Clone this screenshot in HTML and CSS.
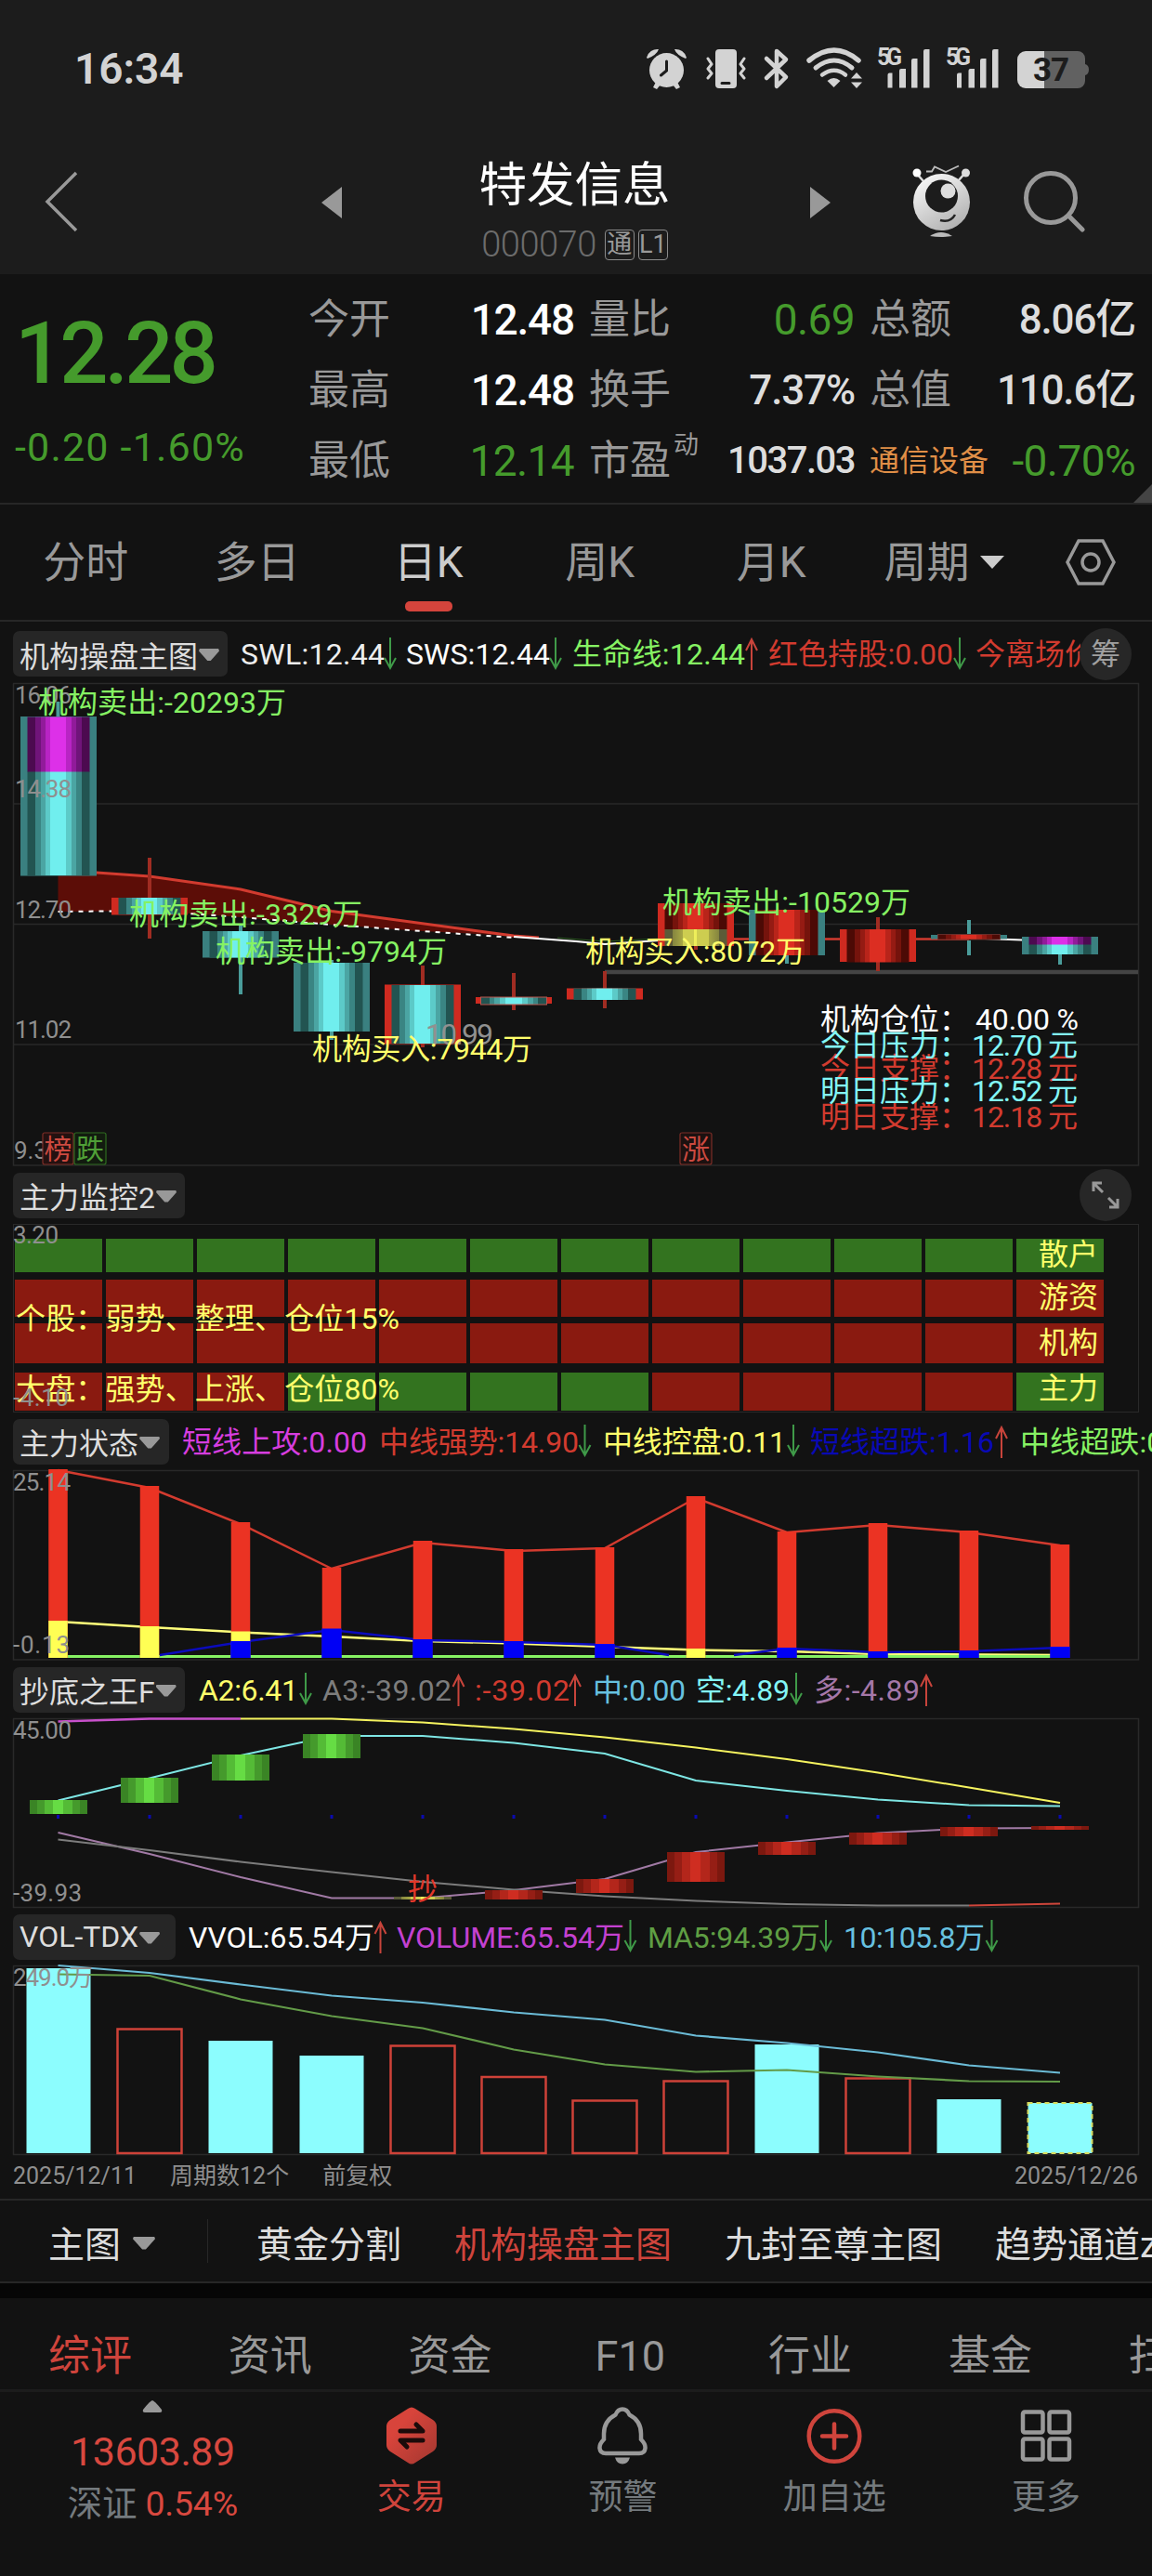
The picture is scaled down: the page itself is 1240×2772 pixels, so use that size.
FILE: index.html
```html
<!DOCTYPE html>
<html lang="zh-CN">
<head>
  <meta charset="UTF-8">
  <title>特发信息 000070</title>
  <link rel="stylesheet" href="styles.css">
</head>
<body>

  <!-- shared gradients and arrows -->
  <svg class="defs" width="0" height="0">
    <defs>
      <linearGradient id="cyan">
        <stop offset=".13" stop-color="#225451"/><stop offset=".13" stop-color="#3a8583"/>
        <stop offset=".21" stop-color="#3a8583"/><stop offset=".21" stop-color="#4ba5a3"/>
        <stop offset=".29" stop-color="#4ba5a3"/><stop offset=".29" stop-color="#5ccac8"/>
        <stop offset=".37" stop-color="#5ccac8"/><stop offset=".37" stop-color="#70eeee"/>
        <stop offset=".62" stop-color="#70eeee"/><stop offset=".62" stop-color="#5ccac8"/>
        <stop offset=".71" stop-color="#5ccac8"/><stop offset=".71" stop-color="#4ba5a3"/>
        <stop offset=".79" stop-color="#4ba5a3"/><stop offset=".79" stop-color="#3a8583"/>
        <stop offset=".87" stop-color="#3a8583"/><stop offset=".87" stop-color="#225451"/>
      </linearGradient>
      <linearGradient id="pink">
        <stop offset=".13" stop-color="#4c0a50"/><stop offset=".13" stop-color="#70147a"/>
        <stop offset=".21" stop-color="#70147a"/><stop offset=".21" stop-color="#911b9a"/>
        <stop offset=".29" stop-color="#911b9a"/><stop offset=".29" stop-color="#b824c4"/>
        <stop offset=".37" stop-color="#b824c4"/><stop offset=".37" stop-color="#dd30e8"/>
        <stop offset=".62" stop-color="#dd30e8"/><stop offset=".62" stop-color="#b824c4"/>
        <stop offset=".71" stop-color="#b824c4"/><stop offset=".71" stop-color="#911b9a"/>
        <stop offset=".79" stop-color="#911b9a"/><stop offset=".79" stop-color="#70147a"/>
        <stop offset=".87" stop-color="#70147a"/><stop offset=".87" stop-color="#4c0a50"/>
      </linearGradient>
      <linearGradient id="red">
        <stop offset=".13" stop-color="#4c0a05"/><stop offset=".13" stop-color="#75130c"/>
        <stop offset=".21" stop-color="#75130c"/><stop offset=".21" stop-color="#951b13"/>
        <stop offset=".29" stop-color="#951b13"/><stop offset=".29" stop-color="#b8241a"/>
        <stop offset=".37" stop-color="#b8241a"/><stop offset=".37" stop-color="#dc2e22"/>
        <stop offset=".62" stop-color="#dc2e22"/><stop offset=".62" stop-color="#b8241a"/>
        <stop offset=".71" stop-color="#b8241a"/><stop offset=".71" stop-color="#951b13"/>
        <stop offset=".79" stop-color="#951b13"/><stop offset=".79" stop-color="#75130c"/>
        <stop offset=".87" stop-color="#75130c"/><stop offset=".87" stop-color="#4c0a05"/>
      </linearGradient>
      <linearGradient id="gold">
        <stop offset=".13" stop-color="#5b5b38"/><stop offset=".13" stop-color="#85853f"/>
        <stop offset=".29" stop-color="#a8a845"/><stop offset=".29" stop-color="#cdcd50"/>
        <stop offset=".47" stop-color="#cdcd50"/><stop offset=".47" stop-color="#eeee5a"/>
        <stop offset=".52" stop-color="#eeee5a"/><stop offset=".52" stop-color="#cdcd50"/>
        <stop offset=".71" stop-color="#cdcd50"/><stop offset=".71" stop-color="#a8a845"/>
        <stop offset=".87" stop-color="#85853f"/><stop offset=".87" stop-color="#5b5b38"/>
      </linearGradient>
      <linearGradient id="green">
        <stop offset=".13" stop-color="#3a8425"/><stop offset=".13" stop-color="#459a2c"/>
        <stop offset=".26" stop-color="#459a2c"/><stop offset=".26" stop-color="#54bb36"/>
        <stop offset=".4" stop-color="#54bb36"/><stop offset=".4" stop-color="#66dc44"/>
        <stop offset=".58" stop-color="#66dc44"/><stop offset=".58" stop-color="#54bb36"/>
        <stop offset=".74" stop-color="#54bb36"/><stop offset=".74" stop-color="#459a2c"/>
        <stop offset=".87" stop-color="#459a2c"/><stop offset=".87" stop-color="#3a8425"/>
      </linearGradient>
      <linearGradient id="brick">
        <stop offset=".13" stop-color="#7c180f"/><stop offset=".13" stop-color="#951e15"/>
        <stop offset=".26" stop-color="#951e15"/><stop offset=".26" stop-color="#b3261b"/>
        <stop offset=".4" stop-color="#b3261b"/><stop offset=".4" stop-color="#cf2d21"/>
        <stop offset=".58" stop-color="#cf2d21"/><stop offset=".58" stop-color="#b3261b"/>
        <stop offset=".74" stop-color="#b3261b"/><stop offset=".74" stop-color="#951e15"/>
        <stop offset=".87" stop-color="#951e15"/><stop offset=".87" stop-color="#7c180f"/>
      </linearGradient>
      <linearGradient id="silver" x1="0" y1="0" x2=".6" y2="1">
        <stop offset="0" stop-color="#fff"/><stop offset="1" stop-color="#b4b4b4"/>
      </linearGradient>
      <linearGradient id="trade" x1="0" y1="0" x2="1" y2="1">
        <stop offset=".3" stop-color="#d8443b"/><stop offset="1" stop-color="#a23730"/>
      </linearGradient>
      <path id="down" d="M0-17V16M-6 5L0 16L6 5" fill="none" stroke="#3f9a48" stroke-width="2"/>
      <path id="up" d="M0 17V-16M-6-4L0-16L6-4" fill="none" stroke="#c8443b" stroke-width="2"/>
    </defs>
  </svg>

  <header class="top">
    <div class="status">
      <span class="clock">16:34</span>
      <svg class="status-icons" width="484" height="48" viewBox="692 50 484 48">
        <g fill="#d3d3d3">
          <circle cx="717.5" cy="75.5" r="18.5"/>
          <path d="M696 62A12 12 0 0 1 709 53Q707 59 697 63ZM739 62A12 12 0 0 0 726 53Q728 59 738 63Z"/>
          <path d="M703 94l3-6 5 3-4 5zM732 94l-3-6-5 3 4 5z"/>
          <rect x="770" y="53" width="23" height="42" rx="4"/>
          <path d="M897.500 94l-7-7q7-6 14 0z"/>
          <path d="M922 78l6 6.500h-12zM922 95l6-6.500h-12z"/>
          <path d="M955.500 80.500a2 2 0 0 1 2-2h3v16h-5zM968 76a2 2 0 0 1 2-2h5v20.500h-7zM981 65a2 2 0 0 1 2-2h4.500v31.500H981zM994 55a2 2 0 0 1 2-2h4.500v41.500H994z"/>
          <path d="M1030 80.500a2 2 0 0 1 2-2h3v16h-5zM1042.500 76a2 2 0 0 1 2-2h4.500v20.500h-6.500zM1055 65a2 2 0 0 1 2-2h4.500v31.500H1055zM1068 55a2 2 0 0 1 2-2h4.500v41.500H1068z"/>
          <path d="M1104 55h20v40h-20a9 9 0 0 1-9-9V64a9 9 0 0 1 9-9z"/>
        </g>
        <path d="M1124 55h36a8 8 0 0 1 8 8v6q4 1 4 6t-4 6v6a8 8 0 0 1-8 8h-36z" fill="#616161"/>
        <g fill="none" stroke="#d3d3d3" stroke-linecap="round" stroke-linejoin="round">
          <path d="M762 63l4 6-4 5 4 5-4 5M801 63l-4 6 4 5-4 5 4 5" stroke-width="3"/>
          <path d="M825 63l21 20-10 10V55l10 9-21 20" stroke-width="4.500"/>
          <path d="M871 65Q898 43 924 65" stroke-width="5.500"/>
          <path d="M878 73Q898 57 917 73" stroke-width="5"/>
          <path d="M885 80.500Q898 71 910 80.500" stroke-width="4.500"/>
        </g>
        <path d="M717.500 66v10l-6 5M777 89.500h8" fill="none" stroke="#1c1c1c" stroke-width="3" stroke-linecap="round"/>
        <text x="944" y="70" class="g5" textLength="27">5G</text>
        <text x="1018" y="70" class="g5" textLength="27">5G</text>
        <text x="1112" y="87" class="batt" textLength="39">37</text>
      </svg>
    </div>
    <div class="titlebar">
      <svg class="back" width="40" height="70" viewBox="46 182 40 70"><path d="M82 186L51 217L82 248" fill="none" stroke="#999" stroke-width="3.500"/></svg>
      <svg class="prev" width="22" height="34" viewBox="0 0 22 34"><path d="M22 0V34L0 17z" fill="#999"/></svg>
      <div class="stock">
        <h1>特发信息</h1>
        <div class="code"><span>000070</span><i>通</i><i>L1</i></div>
      </div>
      <svg class="next" width="22" height="34" viewBox="0 0 22 34"><path d="M0 0V34L22 17z" fill="#999"/></svg>
      <svg class="mascot" width="66" height="82" viewBox="980 176 66 82">
        <path d="M986 186l8 9M1039 186l-8 9" stroke="#ddd" stroke-width="2.500"/>
        <path d="M997 184.500h6l3-5 12 5.500 14-6.500" fill="none" stroke="#bbb" stroke-width="1.800"/>
        <circle cx="987" cy="186" r="4.500" fill="#fff"/><circle cx="1039.500" cy="186" r="4.500" fill="#ddd"/>
        <circle cx="1013.500" cy="217.500" r="30.500" fill="url(#silver)"/>
        <circle cx="1013.500" cy="211" r="17.500" fill="#1c1c1c"/>
        <circle cx="1020.500" cy="205.500" r="8" fill="#ddd"/>
        <path d="M1012 237q11 3 16-6" fill="none" stroke="#222" stroke-width="2.500"/>
        <path d="M1001 254q12-8 24 0q-12 2-24 0z" fill="#bbb"/>
      </svg>
      <svg class="search" width="68" height="70" viewBox="1100 182 68 70"><g fill="none" stroke="#999" stroke-width="5"><circle cx="1131" cy="213" r="26.500"/><path d="M1151 233l14 14" stroke-linecap="round"/></g></svg>
    </div>
  </header>

  <section class="quote">
    <div class="price">
      <div class="last">12.28</div>
      <div class="change">-0.20 -1.60%</div>
    </div>
    <div class="facts">
      <span>今开</span><b>12.48</b><span>量比</span><b class="g">0.69</b><span>总额</span><b class="w">8.06亿</b>
      <span>最高</span><b>12.48</b><span>换手</span><b class="w">7.37%</b><span>总值</span><b class="w">110.6亿</b>
      <span>最低</span><b class="g">12.14</b><span>市盈<sup>动</sup></span><b class="pe">1037.03</b><span class="sector">通信设备</span><b class="g">-0.70%</b>
    </div>
    <div class="corner"></div>
  </section>

  <nav class="periods">
    <span>分时</span><span>多日</span><span class="on">日K</span><span>周K</span><span>月K</span>
    <span class="more">周期<svg width="26" height="14" viewBox="0 0 26 14"><path d="M0 0H26L13 14z" fill="#ccc"/></svg></span>
    <svg class="gear" width="54" height="50" viewBox="0 0 54 50"><g fill="none" stroke="#999" stroke-width="3.500"><path d="M14 2H40L52 25L40 48H14L2 25z"/><circle cx="27" cy="25" r="9"/></g></svg>
  </nav>

  <section class="panel">
    <div class="bar bar-main">
      <div class="chip c1">机构操盘主图<i></i></div>
      <svg class="legend" width="995" height="66" viewBox="245 669 995 66">
        <text x="259" y="715" fill="#eee" textLength="155">SWL:12.44</text><use href="#down" x="420" y="703"/>
        <text x="437" y="715" fill="#fff" textLength="155">SWS:12.44</text><use href="#down" x="598" y="703"/>
        <text x="616" y="715" fill="#86f263" textLength="186">生命线:12.44</text><use href="#up" x="809" y="704"/>
        <text x="827" y="715" fill="#d23b2f" textLength="199">红色持股:0.00</text><use href="#down" x="1033" y="703"/>
        <text x="1050" y="715" fill="#d23b2f">今离场价</text>
        <rect x="1163" y="669" width="77" height="66" fill="#121212"/>
        <circle cx="1190" cy="704" r="28" fill="#272727"/>
        <text x="1174" y="715" fill="#a0a0a0">筹</text>
      </svg>
    </div>
    <svg class="chart" width="1240" height="520" viewBox="0 735 1240 520">
      <path class="frame" d="M14 735.500H1225.500V1254H14.500V735.500M14 865H1225M14 994.500H1225M14 1124H1225"/>
      <text class="axis" x="16" y="756.500" textLength="61">16.06</text>
      <path d="M62.500 938L104 939L161 943L259 957L357 980.500L553 1007L455 1002L357 995L259 987L161 980L62.500 981z" fill="#5c0d07"/>
      <path d="M62.500 938L104 939L161 943L259 957L357 980.500L553 1007L580 1009" fill="none" stroke="#d23b2f" stroke-width="3"/>
      <path d="M62.500 981L161 980L259 987L357 995L455 1002L553 1009" fill="none" stroke="#fff" stroke-width="2" stroke-dasharray="5 6"/>
      <path d="M553 1008L620 1013L651 1016L709 1012" fill="none" stroke="#fff" stroke-width="2"/>
      <path d="M600 1009L651 1013L709 1010" fill="none" stroke="#2b5a20"/>
      <path d="M790 1010.500H1043" stroke="#d23b2f" stroke-width="2.500"/>
      <path d="M1060 1010L1100 1011.500" stroke="#fff" stroke-width="2"/>
      <path d="M651 1046H1225" stroke="#444" stroke-width="4.500"/>

      <!-- wicks -->
      <path d="M62.500 755V772M259 995V1070M357 1033V1119M847 1028V1037M1141 1027V1038" stroke="#4a9c9a" stroke-width="4"/>
      <path d="M161 923V1010M455 1039V1127M553 1047V1087M651 1045V1085M749 1018V1022M945 987V1045" stroke="#a02c22" stroke-width="4"/>
      <!-- bodies -->
      <g fill="#3a8080">
        <rect x="22" y="771" width="82" height="171.500"/>
        <rect x="218" y="1002" width="82" height="28.500"/>
        <rect x="316" y="1036" width="82" height="74"/>
        <rect x="806" y="979" width="82" height="49"/>
        <rect x="1002" y="1006" width="82" height="4.500"/>
        <rect x="1100" y="1008" width="82" height="19"/>
      </g>
      <g fill="#cf2a20">
        <rect x="120" y="966" width="82" height="18.500"/>
        <rect x="414" y="1059.500" width="82" height="64"/>
        <rect x="512" y="1073" width="82" height="7"/>
        <rect x="610" y="1063.500" width="82" height="12"/>
        <rect x="708" y="972" width="82" height="46"/>
        <rect x="904" y="1000" width="82" height="35"/>
      </g>
      <g fill="url(#cyan)">
        <rect x="29.500" y="830" width="67" height="112"/>
        <rect x="127.500" y="966" width="67" height="18"/>
        <rect x="225.500" y="1002" width="67" height="28.500"/>
        <rect x="323.500" y="1036" width="67" height="74"/>
        <rect x="421.500" y="1060" width="67" height="63"/>
        <rect x="517.500" y="1073" width="71" height="8" stroke="#b9564f"/>
        <rect x="617.500" y="1063.500" width="67" height="12.500"/>
        <rect x="1107.500" y="1016" width="67" height="11"/>
      </g>
      <g fill="url(#pink)">
        <rect x="29.500" y="771.500" width="67" height="59"/>
        <rect x="1107.500" y="1008" width="67" height="8.500"/>
      </g>
      <g fill="url(#red)">
        <rect x="715.500" y="972" width="67" height="28"/>
        <rect x="813.500" y="979" width="67" height="49"/>
        <rect x="911.500" y="1000" width="67" height="35.500"/>
        <rect x="1009.500" y="1005.500" width="67" height="5.500" stroke="#6d3531" stroke-width=".8"/>
      </g>
      <rect x="715.500" y="1000" width="67" height="18" fill="url(#gold)"/>
      <path d="M1043 990V1005M1043 1012V1028" stroke="#4a9c9a" stroke-width="4"/>
      <path d="M161 923V966M161 1000V1010" stroke="#a02c22" stroke-width="4"/>

      <text class="axis" x="16" y="857.500" textLength="61">14.38</text>
      <text class="axis" x="16" y="987.500" textLength="61">12.70</text>
      <text class="axis" x="16" y="1116.500" textLength="61">11.02</text>
      <text class="axis" x="15" y="1247">9.3</text>
      <text x="458" y="1123.500" fill="#909090" textLength="73">10.99</text>

      <g fill="#86f263">
        <text x="41" y="767" textLength="267">机构卖出:-20293万</text>
        <text x="139" y="995" textLength="251">机构卖出:-3329万</text>
        <text x="232" y="1034.500" textLength="249">机构卖出:-9794万</text>
        <text x="713" y="982" textLength="267">机构卖出:-10529万</text>
      </g>
      <g fill="#ffff6b">
        <text x="336" y="1140" textLength="237">机构买入:7944万</text>
        <text x="630" y="1034.500" textLength="237">机构买入:8072万</text>
      </g>
      <g fill="#fff"><text x="883" y="1107.500">机构仓位：</text><text x="1050" y="1107.500" textLength="111">40.00 %</text></g>
      <g fill="#d23b2f"><text x="883" y="1160.500">今日支撑：</text><text x="1046" y="1160.500" textLength="114">12.28 元</text></g>
      <g fill="#d23b2f"><text x="883" y="1213">明日支撑：</text><text x="1046" y="1213" textLength="114">12.18 元</text></g>
      <g fill="#83f6f6"><text x="883" y="1135.500">今日压力：</text><text x="1046" y="1135.500" textLength="114">12.70 元</text></g>
      <g fill="#83f6f6"><text x="883" y="1184.500">明日压力：</text><text x="1046" y="1184.500" textLength="114">12.52 元</text></g>

      <g stroke-width="1.200">
        <rect x="46" y="1219" width="33" height="34" rx="2" fill="#241110" stroke="#7c2d27"/>
        <rect x="80" y="1219" width="34" height="34" rx="2" fill="#121b0f" stroke="#2e6b20"/>
        <rect x="732" y="1219" width="34" height="34" rx="2" fill="#1c1110" stroke="#7c2d27"/>
      </g>
      <text class="tag" x="47.500" y="1247" fill="#cc4a40">榜</text>
      <text class="tag" x="82" y="1247" fill="#4f9f37">跌</text>
      <text class="tag" x="734" y="1247" fill="#cc4a40">涨</text>
    </svg>
  </section>

  <section class="panel">
    <div class="bar bar-mon">
      <div class="chip c2">主力监控2<i></i></div>
      <div class="expand"><svg width="32" height="32" viewBox="0 0 32 32"><path d="M3 12V3H12M3 3L13 13M29 20V29H20M29 29L19 19" fill="none" stroke="#999" stroke-width="3"/></svg></div>
    </div>
    <div class="monitor">
      <div class="cells r1"><i></i><i></i><i></i><i></i><i></i><i></i><i></i><i></i><i></i><i></i><i></i><i></i></div>
      <div class="cells r2"><i></i><i></i><i></i><i></i><i></i><i></i><i></i><i></i><i></i><i></i><i></i><i></i></div>
      <div class="cells r3"><i></i><i></i><i></i><i></i><i></i><i></i><i></i><i></i><i></i><i></i><i></i><i></i></div>
      <div class="cells r4"><i></i><i></i><i></i><i class="up"></i><i class="up"></i><i class="up"></i><i class="up"></i><i></i><i></i><i></i><i></i><i class="up"></i></div>
      <svg class="over" width="1240" height="204" viewBox="0 1316 1240 204">
        <g fill="#ffff6b">
          <text x="1118" y="1361">散户</text><text x="1118" y="1407">游资</text>
          <text x="1118" y="1456">机构</text><text x="1118" y="1505">主力</text>
          <text x="17" y="1430" textLength="413">个股：弱势、整理、仓位15%</text>
          <text x="17" y="1506" textLength="413">大盘：强势、上涨、仓位80%</text>
        </g>
        <text class="axis" x="14" y="1338" textLength="49">3.20</text>
        <text class="axis" x="14" y="1513" textLength="60">-4.10</text>
      </svg>
    </div>
  </section>

  <section class="panel">
    <div class="bar">
      <div class="chip c3">主力状态<i></i></div>
      <svg class="legend" width="1058" height="62" viewBox="182 1520 1058 62">
        <text x="196" y="1563" fill="#d63ddf" textLength="199">短线上攻:0.00</text>
        <text x="408" y="1563" fill="#d23b2f" textLength="215">中线强势:14.90</text><use href="#down" x="629.500" y="1550"/>
        <text x="649" y="1563" fill="#ffff6b" textLength="197">中线控盘:0.11</text><use href="#down" x="854" y="1550"/>
        <text x="872" y="1563" fill="#0909b4" textLength="198">短线超跌:1.16</text><use href="#up" x="1078" y="1552"/>
        <text x="1098" y="1563" fill="#86f263" textLength="199">中线超跌:0.00</text>
      </svg>
    </div>
    <svg class="chart" width="1240" height="205" viewBox="0 1582 1240 205">
      <path class="frame" d="M14 1582.500H1225.500V1786H14.500V1582.500"/>
      <path d="M62.500 1582L161 1601L259 1640L357 1688L455 1660L553 1669L651 1666L749 1612L847 1649L945 1641L1043 1649L1141 1663" fill="none" stroke="#d23b2f" stroke-width="2.500"/>
      <path d="M62.500 1745L161 1751L259 1756.500L357 1761L455 1766L553 1768.500L651 1772L749 1775.500L847 1777L945 1780L1141 1781" fill="none" stroke="#ffff7a" stroke-width="2.500"/>
      <path d="M73 1782.500H1141" stroke="#86f263" stroke-width="3"/>
      <path d="M172 1781L259 1767L357 1754L455 1765L553 1767L651 1770L720 1781M790 1781L847 1774L945 1778L1043 1777L1141 1773" fill="none" stroke="#0b0bbd" stroke-width="2.500"/>
      <path d="M62.500 1581V1784M161 1599V1784M259 1638V1784M357 1687V1784M455 1658V1784M553 1667V1784M651 1665V1784M749 1610V1784M847 1648V1784M945 1639V1784M1043 1647V1784M1141 1662V1784" stroke="#eb3323" stroke-width="20.500"/>
      <path d="M62.500 1744V1784M161 1750V1784M259 1755.500V1784M749 1774V1784" stroke="#ffff54" stroke-width="20.500"/>
      <path d="M259 1766V1784M357 1752.500V1784M455 1764V1784M553 1766V1784M651 1769V1784M847 1773V1784M945 1777V1784M1043 1776V1784M1141 1772V1784" stroke="#0000f5" stroke-width="21.500"/>
      <text class="axis" x="14" y="1604" textLength="62">25.14</text>
      <text class="axis" x="14" y="1779" textLength="61">-0.13</text>
    </svg>
  </section>

  <section class="panel">
    <div class="bar">
      <div class="chip c2">抄底之王F<i></i></div>
      <svg class="legend" width="1041" height="62" viewBox="199 1786 1041 62">
        <text x="214" y="1829" fill="#ffff6b" textLength="107">A2:6.41</text><use href="#down" x="329" y="1816"/>
        <text x="347" y="1829" fill="#7d7d7d" textLength="139">A3:-39.02</text><use href="#up" x="493.500" y="1818"/>
        <text x="511" y="1829" fill="#d23b2f" textLength="102">:-39.02</text><use href="#up" x="619" y="1818"/>
        <text x="638" y="1829" fill="#67c1e0" textLength="100">中:0.00</text>
        <text x="749" y="1829" fill="#83f6f6" textLength="101">空:4.89</text><use href="#down" x="857" y="1816"/>
        <text x="876" y="1829" fill="#a577a8" textLength="114">多:-4.89</text><use href="#up" x="997" y="1818"/>
      </svg>
    </div>
    <svg class="chart" width="1240" height="204" viewBox="0 1848 1240 204">
      <path class="frame" d="M14 1848.500H1225.500V2051.500H14.500V1848.500"/>
      <g fill="none" stroke-width="2">
        <path d="M62.500 1851.500L161 1848.500H259" stroke="#c850cb" stroke-width="2.500"/>
        <path d="M259 1848.500H357L455 1852.500L553 1859.500L651 1868.500L749 1879.500L847 1892L945 1906.500L1043 1922.500L1141 1939" stroke="#f5f35f"/>
        <path d="M62.500 1936.500L161 1912.500L259 1888L357 1867H455L553 1874.500L651 1886L749 1915L847 1926L945 1935.500L1043 1941.500L1141 1942.500" stroke="#7ee6e4"/>
        <path d="M62.500 1971L161 1994L259 2019L357 2041.500H455L553 2033L651 2021L749 1992L847 1981.500L945 1971.500L1043 1966.500L1141 1966" stroke="#a17aa5"/>
        <path d="M62.500 1978.500L161 1990L259 2002.500L357 2013.500L455 2024L553 2032.500L651 2039.500L749 2044.500L847 2048L945 2049.500H1043" stroke="#7c7c7c"/>
        <path d="M1043 2049.500L1141 2047.500" stroke="#cf463b"/>
        <path d="M61 1954h3M159.500 1954h3M257.500 1954h3M355.500 1954h3M453.500 1954h3M551.500 1954h3M649.500 1954h3M747.500 1954h3M845.500 1954h3M943.500 1954h3M1041.500 1954h3M1139.500 1954h3" stroke="#0a0ab0" stroke-width="4"/>
      </g>
      <g fill="url(#green)">
        <rect x="32" y="1936" width="62" height="15"/><rect x="130" y="1912" width="62" height="27"/>
        <rect x="228" y="1887" width="62" height="28"/><rect x="326" y="1865" width="62" height="26"/>
      </g>
      <g fill="url(#brick)">
        <rect x="522" y="2033" width="62" height="10"/><rect x="620" y="2021" width="62" height="15"/>
        <rect x="718" y="1992" width="62" height="32"/><rect x="816" y="1981" width="62" height="14"/>
        <rect x="914" y="1971" width="62" height="13"/><rect x="1012" y="1965" width="62" height="10"/>
        <rect x="1110" y="1964" width="62" height="4"/>
      </g>
      <rect x="424" y="2040" width="62" height="3" fill="url(#gold)"/>
      <text x="439" y="2043" fill="#e2382a">抄</text>
      <text class="axis" x="14" y="1870" textLength="63">45.00</text>
      <text class="axis" x="14" y="2045" textLength="74">-39.93</text>
    </svg>
  </section>

  <section class="panel">
    <div class="bar">
      <div class="chip c4">VOL-TDX<i></i></div>
      <svg class="legend" width="1051" height="62" viewBox="189 2052 1051 62">
        <text x="203" y="2095" fill="#fff" textLength="200">VVOL:65.54万</text><use href="#up" x="409.500" y="2084"/>
        <text x="427" y="2095" fill="#c441d1" textLength="245">VOLUME:65.54万</text><use href="#down" x="678.500" y="2082"/>
        <text x="697" y="2095" fill="#5f9e43" textLength="186">MA5:94.39万</text><use href="#down" x="889" y="2082"/>
        <text x="908" y="2095" fill="#67c1e0" textLength="152">10:105.8万</text><use href="#down" x="1067.500" y="2082"/>
      </svg>
    </div>
    <svg class="chart" width="1240" height="204" viewBox="0 2114 1240 204">
      <path class="frame" d="M14 2114.500H1225.500V2317.500H14.500V2114.500"/>
      <g fill="#8cfdfe">
        <rect x="28.500" y="2117" width="69" height="199"/>
        <rect x="224.500" y="2195" width="69" height="121"/>
        <rect x="322.500" y="2211" width="69" height="105"/>
        <rect x="812.500" y="2199" width="69" height="117"/>
        <rect x="1008.500" y="2258" width="69" height="58"/>
        <rect x="1106.500" y="2262" width="69" height="54" stroke="#d8dc5e" stroke-width="2" stroke-dasharray="5 4"/>
      </g>
      <g fill="none" stroke="#ce4238" stroke-width="2.500">
        <rect x="126.500" y="2182.500" width="69" height="133.500"/>
        <rect x="420.500" y="2200.500" width="69" height="115.500"/>
        <rect x="518.500" y="2234" width="69" height="82"/>
        <rect x="616.500" y="2259.500" width="69" height="56.500"/>
        <rect x="714.500" y="2238.500" width="69" height="77.500"/>
        <rect x="910.500" y="2235.500" width="69" height="80.500"/>
      </g>
      <path d="M62.500 2114L161 2122L259 2134.500L357 2146.500L455 2154L553 2164.500L651 2172.500L749 2189.500L847 2197.500L945 2207.500L1043 2221.500L1141 2229.500" fill="none" stroke="#6bbbd6" stroke-width="2.200"/>
      <path d="M62.500 2123.500L161 2125L259 2150.500L357 2168.500L455 2181.500L553 2204.500L651 2220.500L749 2228.500L847 2226.500L945 2233.500L1043 2238.500L1141 2239" fill="none" stroke="#639b48" stroke-width="2.200"/>
      <text class="axis" x="14" y="2136" textLength="86">249.0万</text>
    </svg>
    <div class="dates"><span>2025/12/11</span><span>周期数12个</span><span>前复权</span><span class="end">2025/12/26</span></div>
  </section>

  <div class="presets">
    <span class="main">主图<i></i></span>
    <span>黄金分割</span><span class="on">机构操盘主图</span><span>九封至尊主图</span><span>趋势通道z</span>
  </div>

  <nav class="infos">
    <span class="on">综评</span><span>资讯</span><span>资金</span><span>F10</span><span>行业</span><span>基金</span><span>扫雷</span>
  </nav>

  <footer class="dock">
    <div class="index">
      <svg width="22" height="13" viewBox="0 0 22 13"><path d="M11 0q2 0 10 10q1 3-2 3H3q-3 0-2-3Q9 0 11 0z" fill="#999"/></svg>
      <div class="points">13603.89</div>
      <div class="pct">深证 <em>0.54%</em></div>
    </div>
    <div class="act on">
      <svg width="56" height="62" viewBox="0 0 56 62"><path d="M24 2q4-3 8 0L51 14q4 3 4 7V41q0 4-4 7L32 60q-4 3-8 0L5 48q-4-3-4-7V21q0-4 4-7z" fill="url(#trade)"/><path d="M16 26H40L33 19M40 36H16L23 43" fill="none" stroke="#1b0b0a" stroke-width="5" stroke-linecap="round" stroke-linejoin="round"/></svg>
      <span>交易</span>
    </div>
    <div class="act">
      <svg width="54" height="62" viewBox="0 0 54 62"><path d="M27 2.500q5 0 7.500 6Q47 15 47 29V35q5 5 4.500 9.500Q51 50 45 50H9Q3 50 2.500 44.500Q2 40 7 35V29Q7 15 19.500 8.500Q22 2.500 27 2.500z" fill="none" stroke="#999" stroke-width="4.500"/><path d="M19 54.500H35q-2 7-8 7t-8-7z" fill="#999"/></svg>
      <span>预警</span>
    </div>
    <div class="act">
      <svg width="60" height="62" viewBox="0 0 60 62"><g fill="none" stroke="#cf443c" stroke-width="4.500" stroke-linecap="round"><circle cx="30" cy="31.500" r="27.300"/><path d="M17 31.500H43M30 18.500V44.500"/></g></svg>
      <span>加自选</span>
    </div>
    <div class="act">
      <svg width="56" height="62" viewBox="0 0 56 62"><g fill="none" stroke="#999" stroke-width="4.500"><rect x="3" y="5.500" width="21.500" height="22" rx="2"/><rect x="31.500" y="5.500" width="21.500" height="22" rx="2"/><rect x="3" y="34.500" width="21.500" height="22" rx="2"/><rect x="31.500" y="34.500" width="21.500" height="22" rx="2"/></g></svg>
      <span>更多</span>
    </div>
  </footer>

</body>
</html>
```
FILE: styles.css
```css
* {
  margin: 0;
  padding: 0;
  box-sizing: border-box;
}
body {
  width: 1240px;
  height: 2772px;
  overflow: hidden;
  background: #121212;
  color: #999;
  font-family: Roboto, "Noto Sans CJK SC", sans-serif;
}
svg {
  display: block;
  flex-shrink: 0;
}
i, em {
  font-style: normal;
}
.defs {
  position: absolute;
}

/* header */
.top {
  height: 295px;
  background: #1c1c1c;
}
.status {
  height: 150px;
  padding: 50px 64px 0 80px;
  display: flex;
  justify-content: space-between;
}
.clock {
  font-size: 46px;
  font-weight: 600;
  line-height: 48px;
  color: #d3d3d3;
}
.status-icons {
  overflow: visible;
}
.g5 {
  font-size: 25px;
  font-weight: 700;
  fill: #d3d3d3;
}
.batt {
  font-size: 35px;
  font-weight: 700;
  fill: #1c1c1c;
}
.titlebar {
  height: 145px;
  display: flex;
  align-items: flex-start;
  padding-left: 46px;
}
.back {
  margin-top: 32px;
}
.prev {
  margin: 51px 0 0 260px;
}
.stock {
  width: 504px;
  padding-top: 14px;
  padding-right: 3px;
  text-align: center;
}
.stock h1 {
  font-size: 51.5px;
  font-weight: 400;
  line-height: 72px;
  color: #fff;
}
.code {
  display: flex;
  justify-content: center;
  align-items: center;
  height: 58px;
  margin-top: -2px;
  gap: 4px;
  font-size: 38px;
  font-weight: 300;
  color: #6c6c6c;
}
.code span {
  margin-right: 5px;
  letter-spacing: -0.5px;
}
.code i {
  width: 32px;
  height: 33px;
  border: 1px solid #8a8a8a;
  border-radius: 4px;
  font-size: 27px;
  font-weight: 400;
  line-height: 30px;
  color: #999;
}
.next {
  margin-top: 51px;
}
.mascot {
  margin: 26px 0 0 86px;
}
.search {
  margin: 32px 0 0 54px;
}

/* quote */
.quote {
  position: relative;
  display: flex;
  height: 248px;
  border-bottom: 2px solid #272727;
}
.price {
  width: 332px;
  padding: 31px 0 0 16px;
  color: #459b2c;
}
.last {
  font-size: 92px;
  font-weight: 500;
  line-height: 110px;
  letter-spacing: -4px;
}
.change {
  margin-top: 17px;
  font-size: 43px;
  line-height: 56px;
  letter-spacing: 1.2px;
}
.facts {
  flex: 1;
  display: grid;
  grid-template-columns: 92px 194px 93px 209px 92px 228px;
  grid-template-rows: repeat(3, 76px);
  padding-top: 11px;
  font-size: 44px;
  line-height: 76px;
  white-space: nowrap;
}
.facts > :nth-child(6n+3),
.facts > :nth-child(6n+5) {
  padding-left: 16px;
}
.facts b {
  text-align: right;
  font-size: 46px;
  font-weight: 500;
  letter-spacing: -1.2px;
  color: #fff;
}
.facts b.g {
  color: #459b2c;
  font-weight: 400;
  letter-spacing: -0.6px;
}
.facts b.w {
  color: #ddd;
  font-size: 44px;
}
.facts b.pe {
  color: #ddd;
  font-size: 40px;
  letter-spacing: -1.5px;
}
.facts sup {
  display: inline-block;
  font-size: 27px;
  line-height: 30px;
  margin-left: 3px;
  vertical-align: 23px;
}
.facts .sector {
  font-size: 32px;
  color: #e08f47;
}
.facts > :nth-child(6n) {
  padding-right: 18px;
}
.corner {
  position: absolute;
  right: 0;
  bottom: 0;
  border-left: 20px solid transparent;
  border-bottom: 20px solid #444;
}

/* period tabs */
.periods {
  display: flex;
  align-items: center;
  height: 126px;
  border-bottom: 2px solid #272727;
  font-size: 46px;
  line-height: 124px;
}
.periods span {
  position: relative;
  width: 184.5px;
  text-align: center;
}
.periods .on {
  color: #ccc;
}
.periods .on::after {
  content: "";
  position: absolute;
  left: 67px;
  bottom: 9px;
  width: 51px;
  height: 11px;
  border-radius: 5px;
  background: #d4443c;
}
.periods .more {
  width: 223px;
  padding-left: 29px;
  display: flex;
  align-items: center;
  gap: 11px;
}
.gear {
  margin-left: 1px;
}

/* indicator panels */
.bar {
  display: flex;
  align-items: center;
  height: 62px;
  padding-left: 14px;
}
.bar-main {
  height: 66px;
}
.chip {
  display: flex;
  align-items: center;
  height: 49px;
  padding-left: 7px;
  border-radius: 7px;
  background: #262626;
  font-size: 32px;
  color: #ddd;
  white-space: nowrap;
}
.chip i {
  width: 22px;
  height: 13px;
  margin: 2px 0 0 1px;
  background: #999;
  clip-path: polygon(4% 0, 96% 0, 100% 20%, 58% 100%, 42% 100%, 0 20%);
}
.bar-main .chip {
  margin-top: 3px;
}
.c1 { width: 231px; }
.c2 { width: 185px; }
.c3 { width: 168px; }
.c4 { width: 175px; }
.chart {
  overflow: visible;
}
.legend text,
.chart text,
.over text {
  font-size: 32px;
}
.chart .axis,
.over .axis {
  font-size: 26px;
  fill: #8f8f8f;
}
.chart .tag {
  font-size: 30px;
}
.frame {
  fill: none;
  stroke: #292929;
  stroke-width: 1.5;
}
.bar-mon {
  justify-content: space-between;
  padding-right: 22px;
}
.expand {
  width: 56px;
  height: 56px;
  border-radius: 50%;
  background: #272727;
  display: flex;
  align-items: center;
  justify-content: center;
}
.monitor {
  position: relative;
  height: 203px;
}
.monitor::before {
  content: "";
  position: absolute;
  inset: 0 14px 0 14px;
  border: 1.5px solid #292929;
}
.cells {
  display: grid;
  grid-template-columns: repeat(12, 94px);
  column-gap: 4px;
  padding-left: 16px;
}
.cells i {
  background: #8a1a10;
}
.r1 {
  padding-top: 16px;
  height: 52px;
}
.r1 i, .cells .up {
  background: #33731f;
}
.r2 {
  height: 40px;
  margin-top: 8px;
}
.r3 {
  height: 43px;
  margin-top: 7px;
}
.r4 {
  height: 41px;
  margin-top: 10px;
}
.over {
  position: absolute;
  left: 0;
  top: -1px;
  overflow: visible;
}
.dates {
  display: flex;
  height: 47px;
  padding: 0 15px 0 14px;
  font-size: 25px;
  line-height: 45px;
  color: #8f8f8f;
}
.dates span {
  margin-right: 36px;
}
.dates .end {
  margin: 0 0 0 auto;
}

/* preset row */
.presets {
  display: flex;
  align-items: center;
  height: 107px;
  overflow: hidden;
  border-bottom: 16px solid #060606;
  box-shadow: inset 0 2px #272727, inset 0 -2px #272727;
  font-size: 39px;
  color: #ddd;
  white-space: nowrap;
}
.presets span {
  margin-right: 57px;
}
.presets .main {
  display: flex;
  align-items: center;
  width: 224px;
  height: 47px;
  margin-right: 52px;
  padding-left: 52px;
  flex-shrink: 0;
  border-right: 1px solid #272727;
}
.presets i {
  width: 24px;
  height: 14px;
  margin: 4px 0 0 13px;
  background: #999;
  clip-path: polygon(4% 0, 96% 0, 100% 20%, 58% 100%, 42% 100%, 0 20%);
}
.presets .on, .infos .on {
  color: #cf443c;
}

/* info tabs */
.infos {
  display: flex;
  height: 101px;
  overflow: hidden;
  border-bottom: 3px solid #1c1c1c;
  font-size: 45px;
  line-height: 125px;
}
.infos span {
  width: 193.800px;
  flex-shrink: 0;
  text-align: center;
}

/* bottom dock */
.dock {
  display: flex;
  padding-top: 9px;
}
.index {
  width: 329px;
  display: flex;
  flex-direction: column;
  align-items: center;
}
.points {
  margin-top: 14px;
  font-size: 43px;
  line-height: 56px;
  letter-spacing: -0.5px;
  color: #d8483f;
}
.pct {
  margin-top: 2px;
  font-size: 37.500px;
  line-height: 52px;
  letter-spacing: -0.2px;
  color: #747a7e;
}
.pct em {
  color: #d8483f;
}
.act {
  width: 228px;
  padding-top: 7px;
  display: flex;
  flex-direction: column;
  align-items: center;
  font-size: 37px;
  line-height: 54px;
  color: #747a7e;
}
.act span {
  margin-top: 9px;
}
.act.on {
  color: #cf443c;
}
```
